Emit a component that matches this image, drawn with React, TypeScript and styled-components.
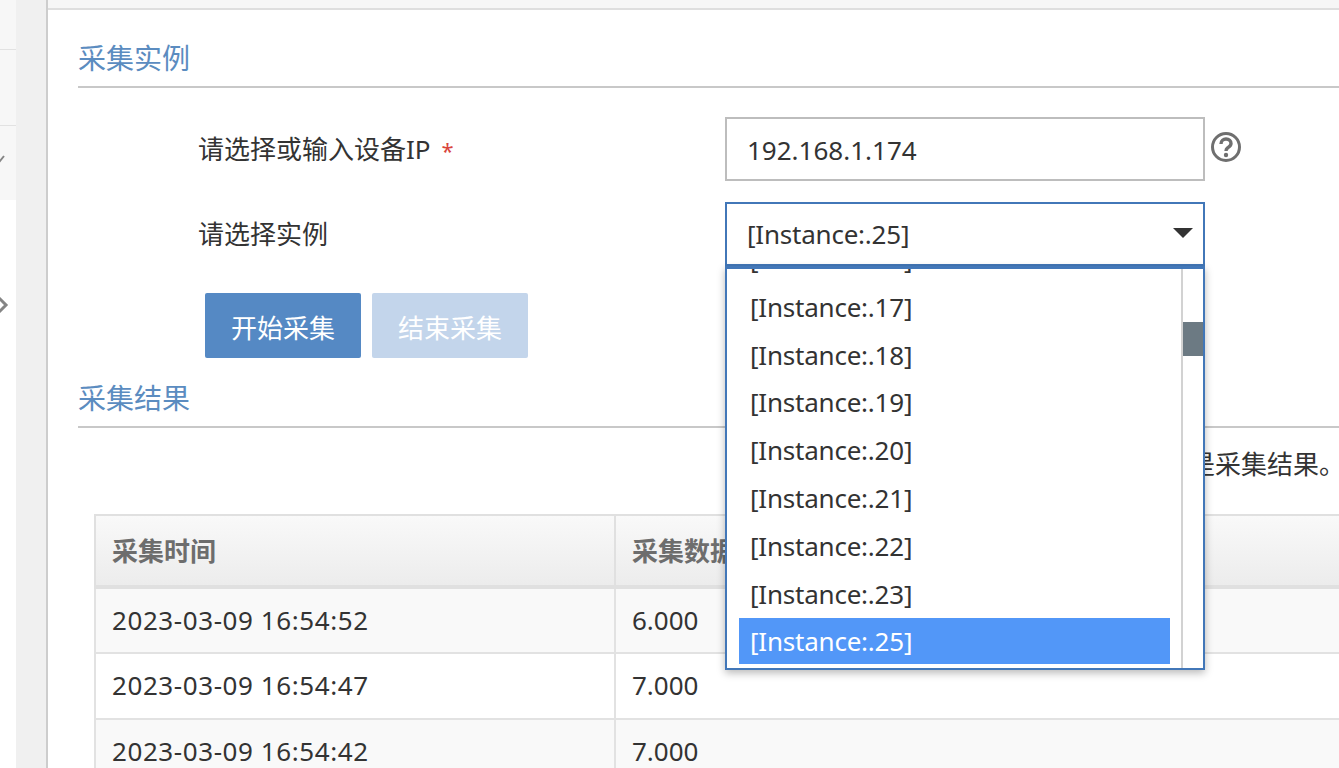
import React from 'react';
import styled, { createGlobalStyle } from 'styled-components';

const Global = createGlobalStyle`
  html, body { margin: 0; padding: 0; background: #fff; }
  body { font-family: "Noto Sans", "Noto Sans CJK SC", sans-serif; color: #333; }
  * { box-sizing: border-box; }
`;

const Page = styled.div`
  display: flex;
  width: 1339px;
  height: 768px;
  overflow: hidden;
`;

const Sidebar = styled.aside`
  width: 16px;
  flex: none;
  display: flex;
  flex-direction: column;
  overflow: hidden;
`;

const SideRow = styled.div<{ $h: number; $shade?: boolean; $line?: boolean; $top?: number }>`
  height: ${p => p.$h}px;
  padding-top: ${p => p.$top ?? 0}px;
  background: ${p => (p.$shade ? '#f7f7f7' : '#fff')};
  border-bottom: ${p => (p.$line ? '1px solid #e2e2e2' : 'none')};
`;

const SideIcon = styled.svg`
  display: block;
  color: #858585;
`;

const Gutter = styled.div`
  width: 32px;
  flex: none;
  background: #f0f0f0;
  border-right: 2px solid #cdcdcd;
`;

const Main = styled.main`
  flex: 1;
  min-width: 0;
  display: flex;
  flex-direction: column;
`;

const TopBar = styled.div`
  height: 10px;
  flex: none;
  background: #f6f6f6;
  border-bottom: 2px solid #dedede;
`;

const Content = styled.div`
  padding: 0 0 0 30px;
`;

const SectionHead = styled.div<{ $mt: number }>`
  margin-top: ${p => p.$mt}px;
  height: 50px;
  border-bottom: 2px solid #c8c8c8;
  color: #5b8cc0;
  font-size: 28px;
  line-height: 40px;
  white-space: nowrap;
`;

const FormRow = styled.div<{ $mt: number }>`
  position: relative;
  display: flex;
  align-items: center;
  margin-top: ${p => p.$mt}px;
  height: 64px;
`;

const Label = styled.label`
  width: 647px;
  flex: none;
  padding-left: 120px;
  padding-bottom: 3px;
  font-size: 26px;
  white-space: nowrap;
  color: #333;
`;

const Star = styled.span`
  color: #d9453d;
  margin-left: 11px;
  font-size: 22px;
`;

const TextBox = styled.div`
  width: 480px;
  height: 64px;
  flex: none;
  border: 2px solid #bdbdbd;
  padding-left: 20px;
  font-size: 26px;
  line-height: 62px;
  color: #333;
`;

const SelectBox = styled(TextBox)`
  position: relative;
  border-color: #4277b8;
  line-height: 60px;
  letter-spacing: -0.22px;
`;

const Caret = styled.span`
  position: absolute;
  right: 10px;
  top: 24px;
  width: 0;
  height: 0;
  border-left: 10px solid transparent;
  border-right: 10px solid transparent;
  border-top: 10px solid #333;
`;

const Help = styled.svg`
  margin-left: 5px;
  margin-bottom: 5px;
  flex: none;
  color: #6f6f6f;
`;

const Dropdown = styled.div`
  position: absolute;
  left: 647px;
  top: 64px;
  width: 480px;
  height: 404px;
  background: #fff;
  border: 2px solid #4277b8;
  border-top-width: 3px;
  box-shadow: 0 3px 8px rgba(0, 0, 0, 0.28);
  display: flex;
  overflow: hidden;
  z-index: 5;
`;

const OptionList = styled.ul`
  list-style: none;
  margin: -33px 0 0;
  padding: 0 11px 0 11px;
  width: 454px;
  flex: none;
`;

const Option = styled.li<{ $active?: boolean }>`
  height: 46px;
  margin: 0 0 1.8px 1px;
  padding-left: 11px;
  font-size: 26px;
  line-height: 46px;
  letter-spacing: -0.22px;
  white-space: nowrap;
  color: ${p => (p.$active ? '#fff' : '#333')};
  background: ${p => (p.$active ? '#5297f8' : 'transparent')};
`;

const Track = styled.div`
  flex: 1;
  border-left: 2px solid #d2d2d2;
  padding-top: 53px;
`;

const Thumb = styled.div`
  height: 34px;
  background: #6c7a83;
`;

const Buttons = styled.div`
  display: flex;
  gap: 11px;
  margin: 27px 0 0 127px;
`;

const Button = styled.button<{ $off?: boolean }>`
  width: 156px;
  height: 65px;
  padding: 3px 0 0;
  border: none;
  border-radius: 2px;
  font: inherit;
  font-size: 26px;
  color: #fff;
  background: ${p => (p.$off ? '#c3d5eb' : '#5589c4')};
`;

const Note = styled.div`
  margin: 16px -6px 0 0;
  height: 40px;
  text-align: right;
  font-size: 26px;
  line-height: 40px;
  white-space: nowrap;
  color: #333;
`;

const Table = styled.table`
  margin: 30px 0 0 16px;
  width: 1400px;
  table-layout: fixed;
  border-collapse: collapse;
  font-size: 26px;
`;

const Th = styled.th<{ $w?: number }>`
  width: ${p => (p.$w ? `${p.$w}px` : 'auto')};
  height: 72px;
  padding: 0 0 1px 16px;
  text-align: left;
  font-weight: 700;
  color: #6d6d6d;
  background: linear-gradient(#f9f9f9, #ececec);
  border: 2px solid #e0e0e0;
  border-bottom-width: 4px;
`;

const Td = styled.td<{ $wide?: boolean }>`
  height: 66px;
  padding: 0 0 2px 16px;
  color: #333;
  letter-spacing: ${p => (p.$wide ? '0.58px' : '0')};
  border: 2px solid #e2e2e2;
  border-top: none;
  white-space: nowrap;
`;

const Row = styled.tr<{ $odd?: boolean }>`
  background: ${p => (p.$odd ? '#f9f9f9' : '#fff')};
`;

const options = ['16', '17', '18', '19', '20', '21', '22', '23', '25'];
const rows = [
  ['2023-03-09 16:54:52', '6.000'],
  ['2023-03-09 16:54:47', '7.000'],
  ['2023-03-09 16:54:42', '7.000'],
];

export default function App() {
  return (
    <Page>
      <Global />
      <Sidebar>
        <SideRow $h={50} $shade $line />
        <SideRow $h={76} $shade $line />
        <SideRow $h={74} $shade $top={29}>
          <SideIcon width="16" height="12" viewBox="0 0 16 12">
            <path d="M-4 1 L0 6 L4 1" fill="none" stroke="currentColor" strokeWidth="2" />
          </SideIcon>
        </SideRow>
        <SideRow $h={568} $top={96}>
          <SideIcon width="16" height="18" viewBox="0 0 16 18">
            <path d="M-1 2 L6 9 L-1 16" fill="none" stroke="currentColor" strokeWidth="3" />
          </SideIcon>
        </SideRow>
      </Sidebar>
      <Gutter />
      <Main>
        <TopBar />
        <Content>
          <SectionHead $mt={28}>采集实例</SectionHead>
          <FormRow $mt={29}>
            <Label>
              请选择或输入设备IP<Star>*</Star>
            </Label>
            <TextBox>192.168.1.174</TextBox>
            <Help width="32" height="32" viewBox="0 0 32 32">
              <circle cx="16" cy="16" r="13.5" fill="none" stroke="currentColor" strokeWidth="3" />
              <path
                d="M11 13 C11 9.5 13.5 8 16 8 C19 8 21 10 21 12.5 C21 15 19 16 17.5 17 C16.5 17.7 16 18.5 16 20"
                fill="none"
                stroke="currentColor"
                strokeWidth="3.4"
              />
              <circle cx="16" cy="24" r="2.2" fill="currentColor" />
            </Help>
          </FormRow>
          <FormRow $mt={21}>
            <Label>请选择实例</Label>
            <SelectBox>
              [Instance:.25]
              <Caret />
            </SelectBox>
            <Dropdown>
              <OptionList>
                {options.map(o => (
                  <Option key={o} $active={o === '25'}>
                    [Instance:.{o}]
                  </Option>
                ))}
              </OptionList>
              <Track>
                <Thumb />
              </Track>
            </Dropdown>
          </FormRow>
          <Buttons>
            <Button>开始采集</Button>
            <Button $off>结束采集</Button>
          </Buttons>
          <SectionHead $mt={20}>采集结果</SectionHead>
          <Note>以下是采集结果。</Note>
          <Table>
            <thead>
              <tr>
                <Th $w={520}>采集时间</Th>
                <Th>采集数据</Th>
              </tr>
            </thead>
            <tbody>
              {rows.map((r, i) => (
                <Row key={r[0]} $odd={i % 2 === 0}>
                  <Td $wide>{r[0]}</Td>
                  <Td>{r[1]}</Td>
                </Row>
              ))}
            </tbody>
          </Table>
        </Content>
      </Main>
    </Page>
  );
}
